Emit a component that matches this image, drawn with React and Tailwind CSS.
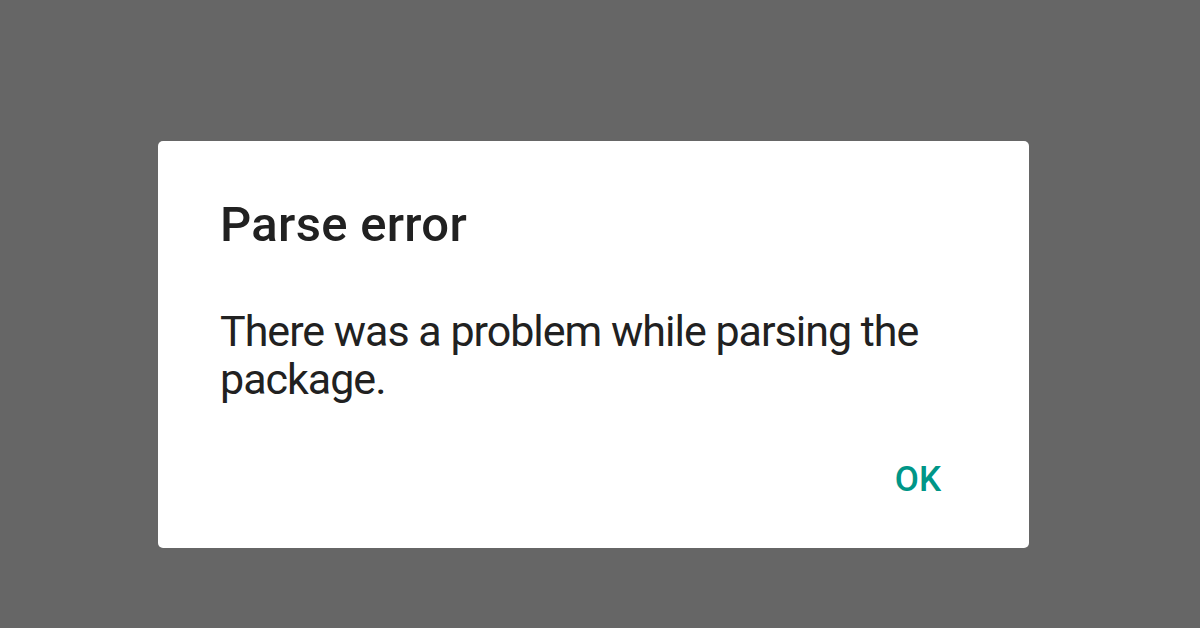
export default function App() {
  return (
    <div
      className="w-[1200px] h-[628px] bg-[#666666] flex items-start pl-[158px] pt-[141px]"
      style={{ fontFamily: "Roboto, 'Liberation Sans', sans-serif" }}
    >
      <div className="w-[871px] h-[407px] bg-white rounded-[5px] flex flex-col pl-[62px] pr-[88px]">
        <h1 className="mt-[55px] text-[49px] leading-[58px] font-medium text-[#212121] tracking-[0.3px]">Parse error</h1>
        <p className="mt-[53px] text-[43px] leading-[48px] text-[#212121] tracking-[-1px]">
          There was a problem while parsing the package.
        </p>
        <div className="mt-auto mb-[48px] flex justify-end">
          <button className="text-[35px] leading-[40px] font-medium text-[#009688]">OK</button>
        </div>
      </div>
    </div>
  );
}
